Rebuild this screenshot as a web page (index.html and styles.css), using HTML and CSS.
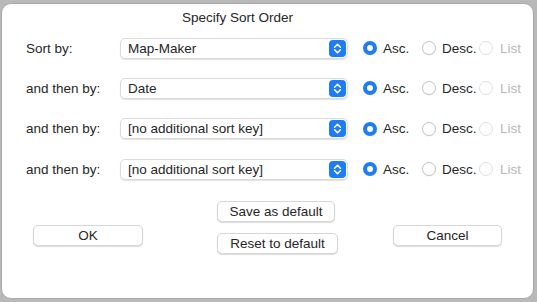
FILE: index.html
```html
<!DOCTYPE html>
<html lang="en">
<head>
    <meta charset="UTF-8">
    <meta name="viewport" content="width=device-width, initial-scale=1.0">
    <title>Specify Sort Order</title>
    <link rel="stylesheet" href="styles.css">
</head>
<body>
<div class="sheet">
    <div class="title">Specify Sort Order</div>

    <div class="rows">
        <div class="row">
            <span class="rowLabel">Sort by:</span>
            <div class="popup">
                <span class="popupText">Map-Maker</span>
                <span class="stepper">
                    <svg width="17" height="17" viewBox="0 0 17 17"><path d="M5.6 7.2 L8.5 4.3 L11.4 7.2 M5.6 9.8 L8.5 12.7 L11.4 9.8" fill="none" stroke="#fff" stroke-width="1.6" stroke-linecap="round" stroke-linejoin="round"/></svg>
                </span>
            </div>
            <div class="radios">
                <span class="radio asc"><span class="dot on"></span>Asc.</span>
                <span class="radio desc"><span class="dot"></span>Desc.</span>
                <span class="radio list disabled"><span class="dot"></span>List</span>
            </div>
        </div>
        <div class="row">
            <span class="rowLabel">and then by:</span>
            <div class="popup">
                <span class="popupText">Date</span>
                <span class="stepper">
                    <svg width="17" height="17" viewBox="0 0 17 17"><path d="M5.6 7.2 L8.5 4.3 L11.4 7.2 M5.6 9.8 L8.5 12.7 L11.4 9.8" fill="none" stroke="#fff" stroke-width="1.6" stroke-linecap="round" stroke-linejoin="round"/></svg>
                </span>
            </div>
            <div class="radios">
                <span class="radio asc"><span class="dot on"></span>Asc.</span>
                <span class="radio desc"><span class="dot"></span>Desc.</span>
                <span class="radio list disabled"><span class="dot"></span>List</span>
            </div>
        </div>
        <div class="row">
            <span class="rowLabel">and then by:</span>
            <div class="popup">
                <span class="popupText">[no additional sort key]</span>
                <span class="stepper">
                    <svg width="17" height="17" viewBox="0 0 17 17"><path d="M5.6 7.2 L8.5 4.3 L11.4 7.2 M5.6 9.8 L8.5 12.7 L11.4 9.8" fill="none" stroke="#fff" stroke-width="1.6" stroke-linecap="round" stroke-linejoin="round"/></svg>
                </span>
            </div>
            <div class="radios">
                <span class="radio asc"><span class="dot on"></span>Asc.</span>
                <span class="radio desc"><span class="dot"></span>Desc.</span>
                <span class="radio list disabled"><span class="dot"></span>List</span>
            </div>
        </div>
        <div class="row">
            <span class="rowLabel">and then by:</span>
            <div class="popup">
                <span class="popupText">[no additional sort key]</span>
                <span class="stepper">
                    <svg width="17" height="17" viewBox="0 0 17 17"><path d="M5.6 7.2 L8.5 4.3 L11.4 7.2 M5.6 9.8 L8.5 12.7 L11.4 9.8" fill="none" stroke="#fff" stroke-width="1.6" stroke-linecap="round" stroke-linejoin="round"/></svg>
                </span>
            </div>
            <div class="radios">
                <span class="radio asc"><span class="dot on"></span>Asc.</span>
                <span class="radio desc"><span class="dot"></span>Desc.</span>
                <span class="radio list disabled"><span class="dot"></span>List</span>
            </div>
        </div>
    </div>

    <div class="buttons">
        <button class="btn okBtn">OK</button>
        <div class="defaults">
            <button class="btn saveBtn">Save as default</button>
            <button class="btn resetBtn">Reset to default</button>
        </div>
        <button class="btn cancelBtn">Cancel</button>
    </div>
</div>
</body>
</html>
```

FILE: styles.css
```css
html, body {
    margin: 0;
    height: 100%;
}

body {
    background-color: #b9b9b9; /* window behind the sheet */
    font-family: "Liberation Sans", Arial, sans-serif;
    font-size: 13.5px;
    color: #262626;
    overflow: hidden;
}

.sheet {
    margin: 3px 0 0 1px;
    width: 531px;
    height: 294px;
    background-color: #ffffff;
    border: 1px solid #a9a9a9;
    border-radius: 10px;
    box-sizing: content-box;
}

.title {
    padding: 6px 0 0 180px;
    height: 18px;
    line-height: 16px;
}

.rows {
    display: flex;
    flex-direction: column;
}

.row {
    display: flex;
    align-items: center;
    height: 40.3px;
    padding-left: 24px;
}

.rowLabel {
    width: 94px;
}

.popup {
    display: flex;
    align-items: center;
    justify-content: space-between;
    width: 228px;
    height: 21px;
    box-sizing: border-box;
    border: 1px solid #dadada;
    border-radius: 5px;
    box-shadow: 0 1px 1px rgba(0, 0, 0, 0.12);
    padding: 0 1px 0 7px;
}

.stepper {
    display: flex;
    width: 17px;
    height: 17px;
    background-color: #1e7cf6;
    border-radius: 4px;
}

.radios {
    display: flex;
    align-items: center;
    margin-left: 15px;
}

.radio {
    display: flex;
    align-items: center;
}

.radio.asc { width: 59px; }
.radio.desc { width: 57px; }

.dot {
    width: 14px;
    height: 14px;
    box-sizing: border-box;
    border: 1px solid #c4c4c4;
    border-radius: 50%;
    background-color: #fff;
    box-shadow: 0 0.5px 1px rgba(0, 0, 0, 0.08);
    margin-right: 6px;
}

.dot.on {
    border: 4px solid #1e7cf6;
    background-color: #fff;
}

.radio.disabled {
    color: #b8b8b8;
}

.radio.disabled .dot {
    border-color: #e0e0e0;
    margin-right: 7px;
    box-shadow: none;
}

.buttons {
    display: flex;
    align-items: flex-start;
    padding: 12px 0 0 31px;
}

.btn {
    font-family: inherit;
    font-size: 13.5px;
    color: #262626;
    background-color: #fff;
    border: 1px solid #d6d6d6;
    border-radius: 5px;
    box-shadow: 0 1px 1px rgba(0, 0, 0, 0.14);
    height: 21px;
    padding: 0;
    line-height: 19px;
}

.okBtn {
    width: 110px;
    margin-top: 24px;
}

.defaults {
    display: flex;
    flex-direction: column;
    align-items: flex-start;
    gap: 11px;
    margin-left: 74px;
    width: 176px;
}

.saveBtn { width: 118px; }
.resetBtn { width: 121px; }

.cancelBtn {
    width: 109px;
    margin-top: 24px;
}
```
